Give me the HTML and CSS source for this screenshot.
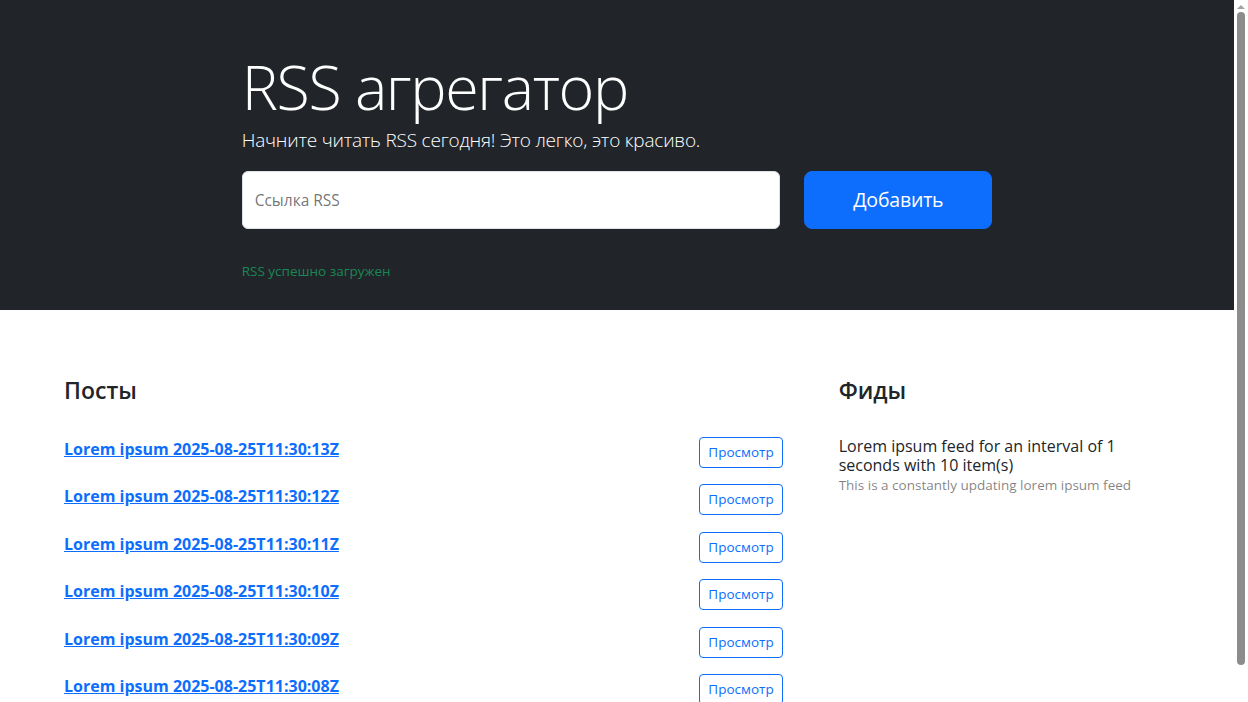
FILE: index.html
```html
<!DOCTYPE html>
<html lang="ru">
<head>
<meta charset="utf-8">
<title>RSS агрегатор</title>
<link rel="stylesheet" href="styles.css">
</head>
<body>
<div class="page">
  <section class="hero">
    <div class="hero-col">
      <h1 class="hero-title">RSS агрегатор</h1>
      <p class="lead">Начните читать RSS сегодня! Это легко, это красиво.</p>
      <form class="rss-form">
        <div class="field">
          <input class="url-input" type="text" aria-label="url" autocomplete="off">
          <label class="field-label">Ссылка RSS</label>
        </div>
        <button type="button" class="add-btn">Добавить</button>
      </form>
      <div class="example"></div>
      <p class="feedback">RSS успешно загружен</p>
    </div>
  </section>
  <section class="content">
    <div class="posts">
      <h2 class="block-title">Посты</h2>
      <ul class="post-list">
        <li class="post-item"><a class="post-link" href="#">Lorem ipsum 2025-08-25T11:30:13Z</a><button class="view-btn" type="button">Просмотр</button></li>
        <li class="post-item"><a class="post-link" href="#">Lorem ipsum 2025-08-25T11:30:12Z</a><button class="view-btn" type="button">Просмотр</button></li>
        <li class="post-item"><a class="post-link" href="#">Lorem ipsum 2025-08-25T11:30:11Z</a><button class="view-btn" type="button">Просмотр</button></li>
        <li class="post-item"><a class="post-link" href="#">Lorem ipsum 2025-08-25T11:30:10Z</a><button class="view-btn" type="button">Просмотр</button></li>
        <li class="post-item"><a class="post-link" href="#">Lorem ipsum 2025-08-25T11:30:09Z</a><button class="view-btn" type="button">Просмотр</button></li>
        <li class="post-item"><a class="post-link" href="#">Lorem ipsum 2025-08-25T11:30:08Z</a><button class="view-btn" type="button">Просмотр</button></li>
      </ul>
    </div>
    <div class="feeds">
      <h2 class="block-title">Фиды</h2>
      <ul class="feed-list">
        <li class="feed-item">
          <h3 class="feed-title">Lorem ipsum feed for an interval of 1 seconds with 10 item(s)</h3>
          <p class="feed-desc">This is a constantly updating lorem ipsum feed</p>
        </li>
      </ul>
    </div>
  </section>
</div>
<div class="scrollbar" aria-hidden="true">
  <div class="scroll-arrow"></div>
  <div class="scroll-thumb"></div>
</div>
</body>
</html>
```

FILE: styles.css
```css
html {
  scrollbar-width: none;
}
html::-webkit-scrollbar {
  display: none;
}
* {
  box-sizing: border-box;
}
body {
  margin: 0;
  display: flex;
  align-items: flex-start;
  font-family: "Open Sans", "Noto Sans", sans-serif;
  font-size: 16px;
  line-height: 1.5;
  color: #212529;
  background: #fff;
}
.page {
  flex: 1;
  min-width: 0;
}
.scrollbar {
  flex: none;
  position: sticky;
  top: 0;
  width: 14px;
  height: 100vh;
  background: #fff;
  display: flex;
  flex-direction: column;
  align-items: center;
  padding: 0 3px 37px;
}
.scroll-arrow {
  width: 0;
  height: 0;
  margin: 5px 0 3px;
  border-left: 4px solid transparent;
  border-right: 4px solid transparent;
  border-bottom: 4px solid #a3a3a3;
}
.scroll-thumb {
  flex: 1;
  width: 8px;
  border-radius: 4px;
  background: #8c8c8c;
}
.hero {
  background: #212529;
  padding: 48px;
  height: 310px;
}
.hero-col {
  width: 750.67px;
  margin: 0 auto;
  position: relative;
  color: #fff;
}
.hero-title {
  margin: 0;
  font-size: 61px;
  font-weight: 300;
  line-height: 77px;
  letter-spacing: -1.35px;
}
.lead {
  margin: 0 0 16px;
  font-size: 19px;
  font-weight: 300;
  line-height: 30px;
  letter-spacing: -0.2px;
}
.rss-form {
  display: flex;
  gap: 24px;
  height: 58px;
}
.field {
  flex: 1;
  position: relative;
}
.url-input {
  width: 100%;
  height: 58px;
  border: 1px solid #dee2e6;
  border-radius: 6px;
  background: #fff;
  padding: 16px 12px;
  font: inherit;
  outline: none;
}
.field-label {
  position: absolute;
  left: 1px;
  top: 1px;
  padding: 16px 12px;
  line-height: 24px;
  font-size: 15.5px;
  color: rgba(33, 37, 41, 0.65);
  pointer-events: none;
}
.add-btn {
  width: 188px;
  height: 58px;
  border: 1px solid #0d6efd;
  background: #0d6efd;
  color: #fff;
  border-radius: 8px;
  font-family: inherit;
  font-size: 19.5px;
  line-height: 30px;
  padding: 0;
  letter-spacing: -0.2px;
}
.example {
  height: 33px;
}
.feedback {
  position: absolute;
  left: 0;
  top: 213px;
  margin: 0;
  font-size: 13.5px;
  line-height: 21px;
  color: #198754;
}
.content {
  display: flex;
  padding: 50px 48px 48px;
}
.posts {
  width: 750.67px;
}
.feeds {
  flex: 1;
  padding-left: 24px;
}
.block-title {
  margin: 0;
  padding: 16px 16px 24px;
  font-size: 23px;
  font-weight: 600;
  line-height: 28.8px;
}
.post-list,
.feed-list {
  list-style: none;
  margin: 0;
  padding: 0;
}
.post-item {
  display: flex;
  justify-content: space-between;
  align-items: flex-start;
  padding: 8px 16px 8.5px;
}
.post-link {
  color: #0d6efd;
  font-weight: 700;
  font-size: 16px;
  line-height: 24px;
  letter-spacing: 0;
  text-decoration: underline;
}
.view-btn {
  height: 31px;
  padding: 4px 8px;
  border: 1px solid #0d6efd;
  border-radius: 4px;
  background: #fff;
  color: #0d6efd;
  font-family: inherit;
  font-size: 13.5px;
  line-height: 21px;
}
.feed-item {
  padding: 8px 16px;
}
.feed-title {
  margin: 0;
  width: 331px;
  font-size: 16px;
  font-weight: 500;
  line-height: 19.2px;
}
.feed-desc {
  margin: 0;
  font-size: 13.5px;
  line-height: 21px;
  color: rgba(0, 0, 0, 0.5);
}
```
